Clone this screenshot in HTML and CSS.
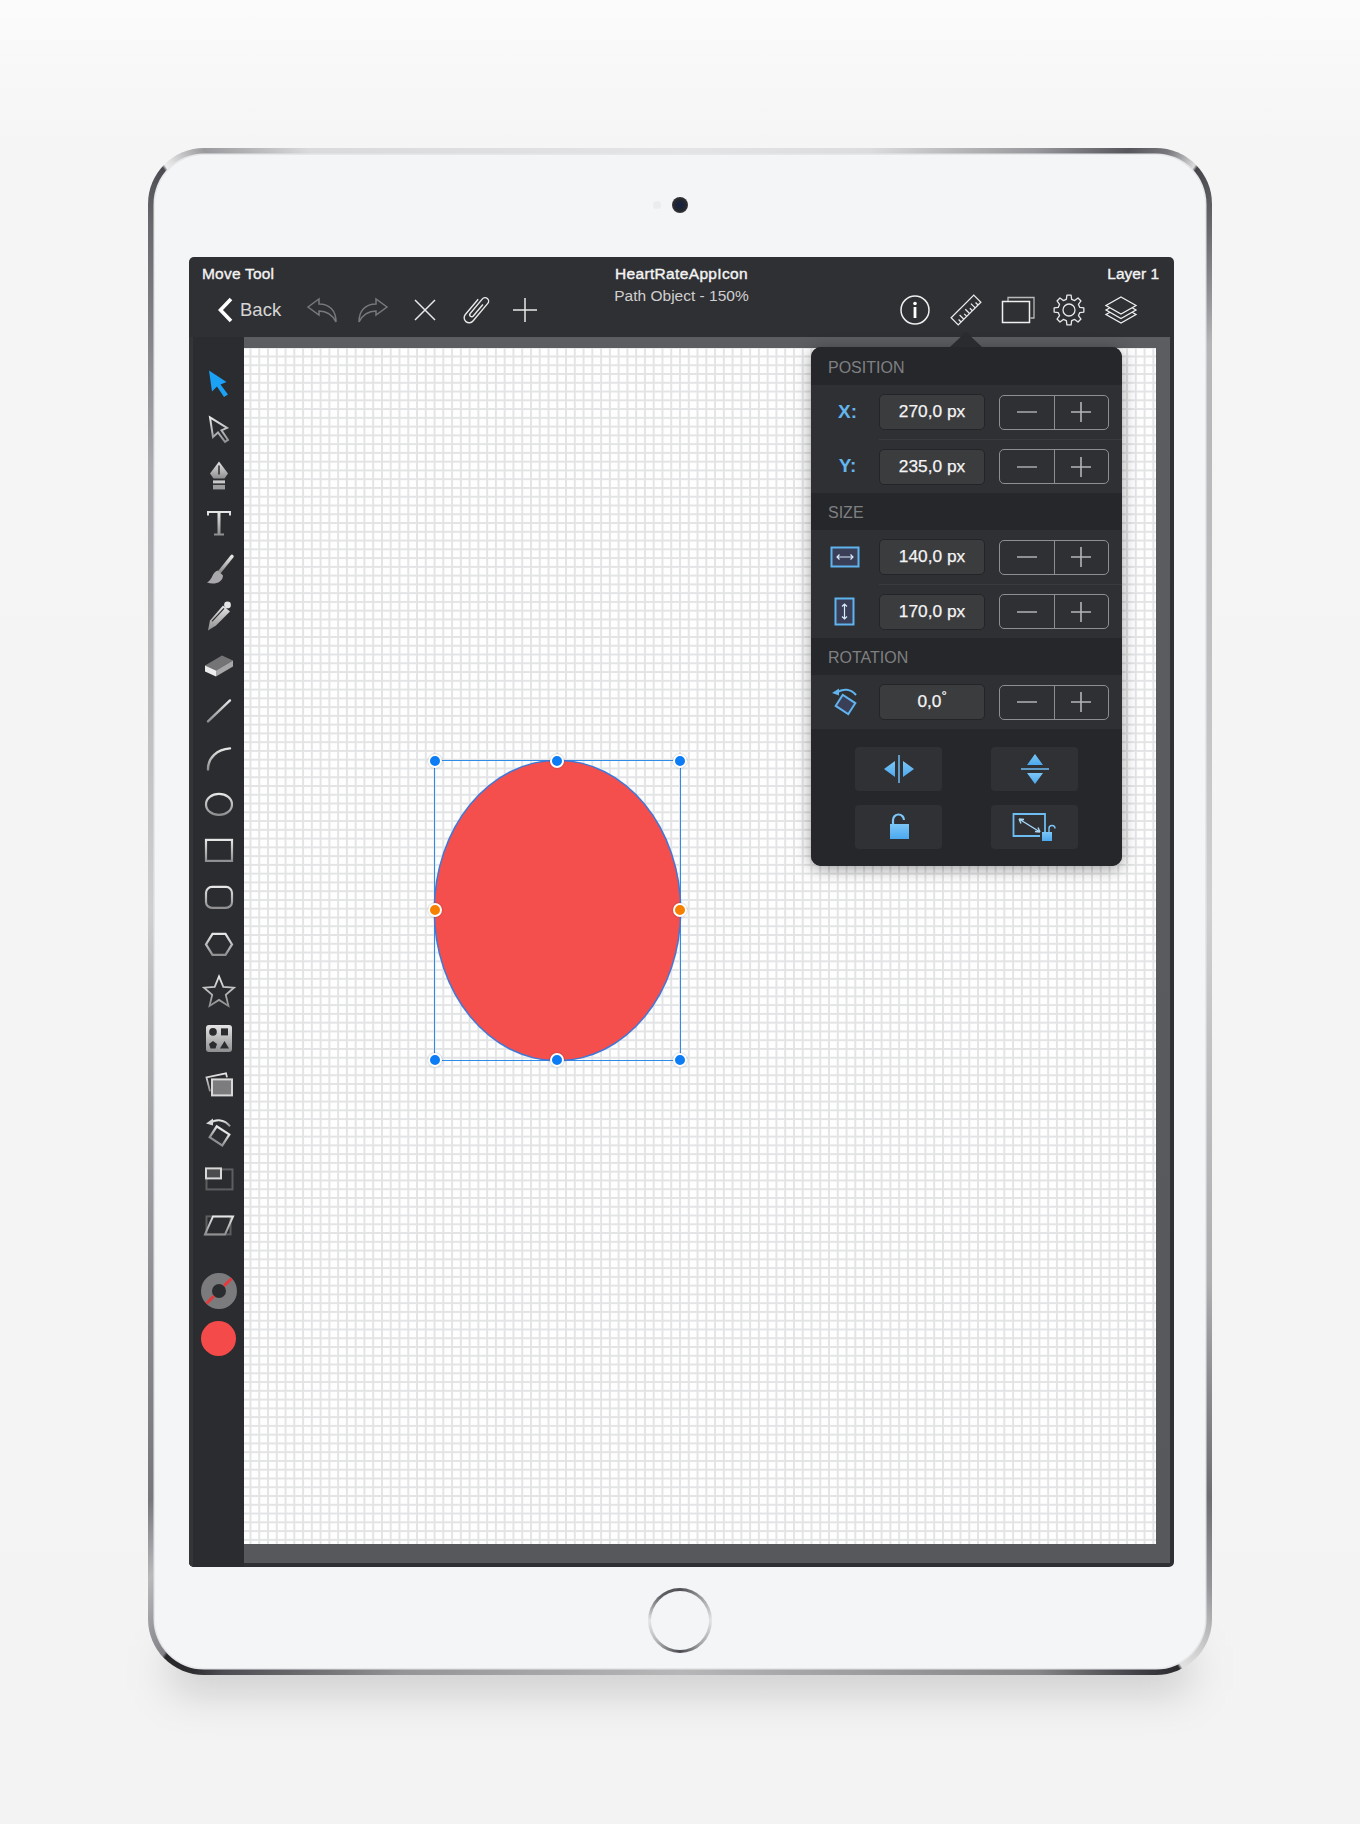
FILE: index.html
```html
<!DOCTYPE html>
<html lang="en">

<head>
    <meta charset="UTF-8">
    <meta name="viewport" content="width=device-width, initial-scale=1.0">
    <title>HeartRateAppIcon</title>
    <link rel="stylesheet" href="styles.css">
</head>

<body>
    <svg class="defs" width="0" height="0" aria-hidden="true">
        <defs>
            <linearGradient id="metal" x1="0" y1="0" x2="0" y2="1">
                <stop offset="0" stop-color="#e6e6e6" />
                <stop offset="1" stop-color="#8f8f91" />
            </linearGradient>
            <linearGradient id="blue" x1="0" y1="0" x2="0" y2="1">
                <stop offset="0" stop-color="#7cc6f7" />
                <stop offset="1" stop-color="#4ba8ee" />
            </linearGradient>
            <symbol id="minus" viewBox="0 0 20 20">
                <path d="M0 10H20" stroke="#a9aaac" stroke-width="1.6" />
            </symbol>
            <symbol id="plus" viewBox="0 0 20 20">
                <path d="M0 10H20M10 0V20" stroke="#b4b5b7" stroke-width="1.6" />
            </symbol>
        </defs>
    </svg>

    <div class="device">
        <div class="face">
            <div class="face-top">
                <span class="sensor"></span>
                <span class="camera"></span>
            </div>

            <div class="screen">
                <header class="topbar">
                    <div class="bar-left">
                        <div class="bar-label">Move Tool</div>
                        <div class="tools">
                            <a class="back">
                                <svg width="16" height="26" viewBox="0 0 16 26">
                                    <path d="M14 2L3.5 13L14 24" fill="none" stroke="#fff" stroke-width="3.6" />
                                </svg>
                                <span>Back</span>
                            </a>
                            <svg class="first-tool" width="34" height="28" viewBox="0 0 34 28">
                                <path d="M3 11L14 3V8C24 8 31 14 31 26C27 18 21 15 14 15V19Z" fill="none" stroke="#77787a" stroke-width="1.5" />
                            </svg>
                            <svg width="34" height="28" viewBox="0 0 34 28">
                                <path d="M31 11L20 3V8C10 8 3 14 3 26C7 18 13 15 20 15V19Z" fill="none" stroke="#77787a" stroke-width="1.5" />
                            </svg>
                            <svg width="34" height="28" viewBox="0 0 34 28">
                                <path d="M8 4L28 24M28 4L8 24" stroke="#e8e8e8" stroke-width="1.5" />
                            </svg>
                            <svg width="34" height="32" viewBox="0 0 34 32">
                                <g transform="translate(2 0) rotate(40 17 16)">
                                    <path d="M18 8V23a2 2 0 0 1 -4 0V4a3.5 3.5 0 0 1 7 0V27a5 5 0 0 1 -10 0V7" fill="none" stroke="#e8e8e8" stroke-width="1.4" />
                                </g>
                            </svg>
                            <svg width="34" height="28" viewBox="0 0 34 28">
                                <path d="M4 14H28M16 2V26" stroke="#e8e8e8" stroke-width="1.5" />
                            </svg>
                        </div>
                    </div>

                    <div class="bar-title">
                        <div class="doc-name">HeartRateAppIcon</div>
                        <div class="doc-sub">Path Object - 150%</div>
                    </div>

                    <div class="bar-right">
                        <div class="bar-label">Layer 1</div>
                        <div class="tools">
                            <svg width="34" height="32" viewBox="0 0 34 32">
                                <circle cx="17" cy="16" r="14" fill="none" stroke="#eee" stroke-width="1.5" />
                                <circle cx="17" cy="9.5" r="1.8" fill="#fff" />
                                <rect x="15.6" y="13" width="2.8" height="11" fill="#fff" />
                            </svg>
                            <svg width="34" height="32" viewBox="0 0 34 32">
                                <g transform="rotate(-45 17 16)" fill="none" stroke="#e8e8e8" stroke-width="1.3">
                                    <rect x="1" y="11" width="32" height="10" />
                                    <path d="M5 21V17.5M9 21V15M13 21V17.5M17 21V15M21 21V17.5M25 21V15M29 21V17.5" />
                                </g>
                            </svg>
                            <svg width="34" height="32" viewBox="0 0 34 32">
                                <path d="M7 7V3.5H33V24H29.5" fill="none" stroke="#b9babb" stroke-width="1.3" />
                                <rect x="1.5" y="7.5" width="27" height="21" fill="none" stroke="#f0f0f0" stroke-width="1.5" />
                            </svg>
                            <svg width="34" height="32" viewBox="0 0 34 32">
                                <polygon transform="translate(17 16)" fill="none" stroke="#e8e8e8" stroke-width="1.3" stroke-linejoin="round" points="-2.66,-10.67 -2.09,-14.85 2.09,-14.85 2.66,-10.67 5.67,-9.43 9.03,-11.98 11.98,-9.03 9.43,-5.67 10.67,-2.66 14.85,-2.09 14.85,2.09 10.67,2.66 9.43,5.67 11.98,9.03 9.03,11.98 5.67,9.43 2.66,10.67 2.09,14.85 -2.09,14.85 -2.66,10.67 -5.67,9.43 -9.03,11.98 -11.98,9.03 -9.43,5.67 -10.67,2.66 -14.85,2.09 -14.85,-2.09 -10.67,-2.66 -9.43,-5.67 -11.98,-9.03 -9.03,-11.98 -5.67,-9.43" />
                                <circle cx="17" cy="16" r="6" fill="none" stroke="#e8e8e8" stroke-width="1.3" />
                            </svg>
                            <svg width="34" height="32" viewBox="0 0 34 32">
                                <path d="M17 3L32 11.5L17 20L2 11.5Z" fill="none" stroke="#eee" stroke-width="1.3" />
                                <path d="M5.5 14L2 16L17 24.5L32 16L28.5 14M5.5 18.5L2 20.5L17 29L32 20.5L28.5 18.5" fill="none" stroke="#eee" stroke-width="1.3" />
                            </svg>
                        </div>
                    </div>
                </header>

                <div class="workspace">
                    <nav class="toolbox">
                        <svg viewBox="0 0 40 40"><polygon points="10,7 27.5,18.5 21.5,21 29,31 25,33.5 18,23 13,28" fill="#1ba1f5" /></svg>
                        <svg viewBox="0 0 40 40"><polygon points="11,8 28,18.5 22.5,21 29,30.5 26,32.5 19,23 14,27.5" fill="none" stroke="url(#metal)" stroke-width="2" /></svg>
                        <svg viewBox="0 0 40 40">
                            <polygon points="20,5 29,17 25.5,22 14.5,22 11,17" fill="url(#metal)" />
                            <path d="M20 9V18" stroke="#2b2c2f" stroke-width="1.5" />
                            <rect x="14" y="24" width="12" height="3" fill="#c9c9ca" />
                            <rect x="14" y="28.5" width="12" height="4.5" fill="#9d9d9f" />
                        </svg>
                        <svg viewBox="0 0 40 40">
                            <path d="M9 12V8.5H31V12M15 31H25" fill="none" stroke="url(#metal)" stroke-width="2" />
                            <rect x="18.5" y="9" width="3" height="22" fill="url(#metal)" />
                        </svg>
                        <svg viewBox="0 0 40 40">
                            <path d="M33 6L21 21" stroke="url(#metal)" stroke-width="3.4" stroke-linecap="round" />
                            <path d="M19 20C13 21 14 29 8 32C15 35 24 32 24 25Z" fill="#a9a9ab" />
                        </svg>
                        <svg viewBox="0 0 40 40">
                            <path d="M9 34L11 24L24 9L31 15L17 29Z" fill="url(#metal)" />
                            <path d="M13 25L25 12" stroke="#2b2c2f" stroke-width="1.2" />
                            <circle cx="28.5" cy="8.5" r="3.4" fill="#e4e4e4" />
                        </svg>
                        <svg viewBox="0 0 40 40">
                            <polygon points="6,22 23,12 34,17 17,27" fill="#747476" />
                            <polygon points="6,22 17,27 17,33 6,28" fill="#ececec" />
                            <polygon points="17,27 34,17 34,23 17,33" fill="#a7a7a9" />
                        </svg>
                        <svg viewBox="0 0 40 40"><path d="M9 31L31 10" stroke="url(#metal)" stroke-width="2.4" stroke-linecap="round" /></svg>
                        <svg viewBox="0 0 40 40"><path d="M9 32C9 20 18 12 31 11" fill="none" stroke="url(#metal)" stroke-width="2.4" stroke-linecap="round" /></svg>
                        <svg viewBox="0 0 40 40"><ellipse cx="20" cy="20" rx="13" ry="10.5" fill="none" stroke="url(#metal)" stroke-width="2.2" /></svg>
                        <svg viewBox="0 0 40 40"><rect x="7" y="9.5" width="26" height="21" fill="none" stroke="url(#metal)" stroke-width="2.2" /></svg>
                        <svg viewBox="0 0 40 40"><rect x="7" y="9.5" width="26" height="21" rx="6" fill="none" stroke="url(#metal)" stroke-width="2.2" /></svg>
                        <svg viewBox="0 0 40 40"><polygon points="7,20 13.5,9.5 26.5,9.5 33,20 26.5,30.5 13.5,30.5" fill="none" stroke="url(#metal)" stroke-width="2.2" /></svg>
                        <svg viewBox="0 0 40 40"><polygon points="20,5 24.3,15.5 35,16.3 26.8,23.5 29.4,34.5 20,28.5 10.6,34.5 13.2,23.5 5,16.3 15.7,15.5" fill="none" stroke="url(#metal)" stroke-width="1.8" /></svg>
                        <svg viewBox="0 0 40 40">
                            <rect x="7" y="6.5" width="26" height="27" rx="3" fill="url(#metal)" />
                            <circle cx="14" cy="13.5" r="3.8" fill="#2b2c2f" />
                            <rect x="22" y="10" width="7" height="7" fill="#2b2c2f" />
                            <polygon points="14,22.5 18,25.5 16.5,30 11.5,30 10,25.5" fill="#2b2c2f" />
                            <polygon points="25.5,22.5 30,30 21,30" fill="#2b2c2f" />
                        </svg>
                        <svg viewBox="0 0 40 40">
                            <path d="M11 27L7.5 13L27 9L28 13" fill="none" stroke="url(#metal)" stroke-width="1.8" />
                            <rect x="13" y="15" width="20" height="16" fill="#7c7c7e" stroke="#d8d8d8" stroke-width="2" />
                        </svg>
                        <svg viewBox="0 0 40 40">
                            <path d="M11 12C17 7 26 8 31 15" fill="none" stroke="url(#metal)" stroke-width="2" />
                            <polygon points="7,12 14,7 14,14" fill="#d8d8d8" />
                            <rect x="13" y="18" width="15" height="13" transform="rotate(33 20.5 24.5)" fill="none" stroke="url(#metal)" stroke-width="2.2" />
                        </svg>
                        <svg viewBox="0 0 40 40">
                            <rect x="7.5" y="11" width="26" height="20" fill="none" stroke="#5d5e60" stroke-width="2" />
                            <rect x="7" y="10" width="15" height="10" fill="#4b4c4e" stroke="#d8d8d8" stroke-width="2" />
                        </svg>
                        <svg viewBox="0 0 40 40">
                            <rect x="7.5" y="11" width="24" height="18" fill="none" stroke="#5d5e60" stroke-width="2" />
                            <polygon points="6,29 14,11 34,11 26,29" fill="none" stroke="url(#metal)" stroke-width="2" />
                        </svg>
                        <svg class="stroke-well" viewBox="0 0 36 36">
                            <circle cx="18" cy="18" r="12.5" fill="none" stroke="#7b7b7e" stroke-width="11" />
                            <path d="M5.5 30.5L13 23M23 13L30.5 5.5" stroke="#e8393a" stroke-width="3" />
                        </svg>
                        <span class="fill-well"></span>
                    </nav>

                    <div class="pasteboard">
                        <div class="canvas">
                            <div class="selection">
                                <div class="oval"></div>
                                <span class="handle h-tl"></span>
                                <span class="handle h-tc"></span>
                                <span class="handle h-tr"></span>
                                <span class="handle orange h-ml"></span>
                                <span class="handle orange h-mr"></span>
                                <span class="handle h-bl"></span>
                                <span class="handle h-bc"></span>
                                <span class="handle h-br"></span>
                            </div>
                        </div>
                    </div>

                    <aside class="popover">
                        <div class="pop-head">POSITION</div>
                        <div class="row">
                            <div class="row-label">X:</div>
                            <div class="row-body">
                                <div class="value">270,0 px</div>
                                <div class="stepper">
                                    <span><svg width="20" height="20"><use href="#minus" /></svg></span>
                                    <span><svg width="20" height="20"><use href="#plus" /></svg></span>
                                </div>
                            </div>
                        </div>
                        <div class="row">
                            <div class="row-label">Y:</div>
                            <div class="row-body">
                                <div class="value">235,0 px</div>
                                <div class="stepper">
                                    <span><svg width="20" height="20"><use href="#minus" /></svg></span>
                                    <span><svg width="20" height="20"><use href="#plus" /></svg></span>
                                </div>
                            </div>
                        </div>

                        <div class="pop-head">SIZE</div>
                        <div class="row">
                            <div class="row-label">
                                <svg class="row-icon" width="30" height="22" viewBox="0 0 30 22">
                                    <rect x="1.5" y="1.5" width="27" height="19" fill="#3b3e57" stroke="#5fb4ef" stroke-width="2" />
                                    <path d="M7 11H23M9.5 8.5L7 11L9.5 13.5M20.5 8.5L23 11L20.5 13.5" fill="none" stroke="#d7ecfb" stroke-width="1.2" />
                                </svg>
                            </div>
                            <div class="row-body">
                                <div class="value">140,0 px</div>
                                <div class="stepper">
                                    <span><svg width="20" height="20"><use href="#minus" /></svg></span>
                                    <span><svg width="20" height="20"><use href="#plus" /></svg></span>
                                </div>
                            </div>
                        </div>
                        <div class="row">
                            <div class="row-label">
                                <svg class="row-icon" width="21" height="29" viewBox="0 0 21 29">
                                    <rect x="1.5" y="1.5" width="18" height="26" fill="#3b3e57" stroke="#5fb4ef" stroke-width="2" />
                                    <path d="M10.5 7V22M8 9.5L10.5 7L13 9.5M8 19.5L10.5 22L13 19.5" fill="none" stroke="#d7ecfb" stroke-width="1.2" />
                                </svg>
                            </div>
                            <div class="row-body">
                                <div class="value">170,0 px</div>
                                <div class="stepper">
                                    <span><svg width="20" height="20"><use href="#minus" /></svg></span>
                                    <span><svg width="20" height="20"><use href="#plus" /></svg></span>
                                </div>
                            </div>
                        </div>

                        <div class="pop-head">ROTATION</div>
                        <div class="row">
                            <div class="row-label">
                                <svg class="row-icon" width="30" height="32" viewBox="0 0 30 32">
                                    <path d="M7 6.5C13 2 21 3 26 9" fill="none" stroke="#5fb4ef" stroke-width="2" />
                                    <polygon points="2,7 9,2.5 9,9.5" fill="#5fb4ef" />
                                    <rect x="8" y="12" width="15" height="13" transform="rotate(33 15.5 18.5)" fill="#3b3e57" stroke="#5fb4ef" stroke-width="2" />
                                </svg>
                            </div>
                            <div class="row-body">
                                <div class="value">0,0<sup>°</sup></div>
                                <div class="stepper">
                                    <span><svg width="20" height="20"><use href="#minus" /></svg></span>
                                    <span><svg width="20" height="20"><use href="#plus" /></svg></span>
                                </div>
                            </div>
                        </div>

                        <div class="actions">
                            <button type="button">
                                <svg width="32" height="32" viewBox="0 0 32 32">
                                    <polygon points="1,16 12,8 12,24" fill="url(#blue)" />
                                    <polygon points="31,16 20,8 20,24" fill="url(#blue)" />
                                    <path d="M16 2V30" stroke="#6dbdf3" stroke-width="1.5" />
                                </svg>
                            </button>
                            <button type="button">
                                <svg width="32" height="32" viewBox="0 0 32 32">
                                    <polygon points="16,1 24,12 8,12" fill="url(#blue)" />
                                    <polygon points="16,31 24,20 8,20" fill="url(#blue)" />
                                    <path d="M2 16H30" stroke="#6dbdf3" stroke-width="1.5" />
                                </svg>
                            </button>
                            <button type="button">
                                <svg width="24" height="30" viewBox="0 0 24 30">
                                    <path d="M6 13V8a5.5 5.5 0 0 1 11 0" fill="none" stroke="#7cc6f7" stroke-width="2.2" />
                                    <rect x="3" y="12" width="19" height="15" fill="url(#blue)" />
                                </svg>
                            </button>
                            <button type="button">
                                <svg width="46" height="30" viewBox="0 0 46 30">
                                    <path d="M33 22V2H1.5V24H28" fill="none" stroke="#6dbdf3" stroke-width="1.8" />
                                    <path d="M7 7L28 20M7 7L12 7.5M7 7L9 11.5M28 20L23 19.5M28 20L26 15.5" fill="none" stroke="#a8d8f8" stroke-width="1.4" />
                                    <rect x="30" y="20" width="10" height="9" fill="url(#blue)" />
                                    <path d="M37 20V16.5a3 3 0 0 1 6 0" fill="none" stroke="#7cc6f7" stroke-width="1.4" />
                                </svg>
                            </button>
                        </div>
                    </aside>
                </div>
            </div>

            <div class="face-bottom">
                <span class="home"><span class="home-inner"></span></span>
            </div>
        </div>
    </div>
</body>

</html>
```

FILE: styles.css
```css
* {
    box-sizing: border-box;
}

body {
    margin: 0;
    height: 1824px;
    overflow: hidden;
    padding: 148px 148px 0;
    font-family: "Liberation Sans", Arial, sans-serif;
    background: linear-gradient(#fbfbfb 0, #f5f5f5 150px, #f3f3f3 100%);
}

.defs {
    position: absolute;
}

/* tablet shell */
.device {
    position: relative;
    z-index: 0;
    width: 1064px;
    height: 1527px;
    padding: 7px;
    border-radius: 56px;
    background: conic-gradient(#e4e4e6 0deg, #dcdcde 14deg, #9a9a9e 25deg, #56565c 30.5deg, #77777c 32.7deg, #dadadc 34.6deg,
        #45454a 34.8deg, #66666b 37.6deg, #b5b5b8 43deg, #cfcfd1 90deg, #aeaeb1 125deg, #6d6d72 137.9deg, #98989c 142deg, #f4f4f4 146.4deg,
        #2f2f33 146.6deg, #444449 148.4deg, #99999c 154.8deg, #d0d0d2 180deg, #aaaaad 200deg, #58585d 211deg, #333337 212.7deg, #2a2a2e 214.6deg,
        #85858a 214.8deg, #b9b9bc 218.5deg, #77777c 222deg, #cfcfd1 270deg, #aeaeb2 310deg, #68686e 322.4deg, #4a4a50 325.2deg,
        #eeeeee 325.4deg, #9a9a9e 328deg, #dadadc 334deg, #e4e4e6 360deg);
}

.device::before {
    content: "";
    position: absolute;
    z-index: -1;
    left: 24px;
    right: 24px;
    bottom: -16px;
    height: 46px;
    background: rgba(0, 0, 0, 0.17);
    filter: blur(22px);
}

.face {
    display: flex;
    flex-direction: column;
    height: 100%;
    border-radius: 49px;
    background: #f4f5f7;
    box-shadow: 0 0 0 1.5px #e6e7e9;
}

.face-top {
    position: relative;
    display: flex;
    justify-content: center;
    height: 102px;
    padding-top: 42px;
}

.camera {
    width: 16px;
    height: 16px;
    border-radius: 50%;
    background: radial-gradient(circle, #18233f 0, #18233f 22%, #26272c 50%, #4a4b50 100%);
}

.sensor {
    position: absolute;
    left: 498px;
    top: 46px;
    width: 8px;
    height: 8px;
    border-radius: 50%;
    background: #ebecee;
}

.face-bottom {
    display: flex;
    justify-content: center;
    padding-top: 21px;
}

.home {
    width: 64px;
    height: 65px;
    padding: 3px;
    border-radius: 50%;
    background: conic-gradient(#4f4f54 0deg, #a9a9ac 50deg, #e4e4e6 90deg, #a3a3a6 140deg, #49494e 180deg, #b9b9bc 230deg, #e6e6e8 270deg, #626267 320deg, #4f4f54 360deg);
}

.home-inner {
    display: block;
    height: 100%;
    border-radius: 50%;
    background: #f4f5f7;
}

/* app */
.screen {
    display: flex;
    flex-direction: column;
    height: 1310px;
    margin: 0 31px 0 34px;
    border-radius: 5px;
    overflow: hidden;
    background: #2f3033;
}

.topbar {
    display: grid;
    grid-template-columns: 1fr auto 1fr;
    flex: none;
    height: 80px;
    color: #fff;
}

.bar-label {
    height: 34px;
    padding: 0 15px 0 13px;
    font-size: 15.5px;
    line-height: 34px;
    letter-spacing: 0.2px;
    color: #f4f4f4;
    -webkit-text-stroke: 0.35px #f4f4f4;
}

.bar-right .bar-label {
    text-align: right;
    letter-spacing: 0;
}

.tools {
    display: flex;
    align-items: center;
    gap: 17px;
    height: 38px;
}

.bar-left .tools {
    padding-left: 28px;
}

.bar-right .tools {
    justify-content: flex-end;
    gap: 17.6px;
    padding-right: 36px;
}

.back {
    display: flex;
    align-items: center;
    gap: 7px;
    font-size: 18.5px;
    color: #d6d6d6;
}

.first-tool {
    margin-left: 7px;
}

.bar-title {
    padding-top: 6px;
    text-align: center;
}

.doc-name {
    font-size: 15.5px;
    line-height: 22px;
    letter-spacing: 0.35px;
    color: #f4f4f4;
    -webkit-text-stroke: 0.4px #f4f4f4;
}

.doc-sub {
    font-size: 15.5px;
    line-height: 22px;
    color: #cfcfd0;
}

.workspace {
    position: relative;
    display: flex;
    flex: 1;
    min-height: 0;
}

.toolbox {
    display: flex;
    flex-direction: column;
    align-items: center;
    flex: none;
    width: 55px;
    padding-top: 22.5px;
    background: #2b2c2f;
    border-left: 4px solid #343538;
}

.toolbox svg {
    flex: none;
    width: 40px;
    height: 46.8px;
}

.toolbox .stroke-well {
    width: 36px;
    height: 36px;
    margin-top: 24.4px;
}

.fill-well {
    width: 35px;
    height: 35px;
    margin-top: 12px;
    border-radius: 50%;
    background: #f44a49;
}

.pasteboard {
    display: flex;
    flex: 1;
    margin: 0 4px 4px 0;
    padding: 11px 14px 19px 0;
    background: linear-gradient(#5c5d60, #57585b);
}

.canvas {
    position: relative;
    flex: 1;
    background-color: #fefefe;
    background-image:
        linear-gradient(#e3e4e6 0, #e3e4e6 1.5px, transparent 1.5px),
        linear-gradient(90deg, #e3e4e6 0, #e3e4e6 1.5px, transparent 1.5px);
    background-size: 8.77px 8.77px;
    background-position: 5.5px 7.5px;
}

/* shape on the canvas */
.selection {
    position: absolute;
    left: 189.5px;
    top: 411.5px;
    width: 247.5px;
    height: 301.5px;
    border: 1.5px solid #2f8be8;
}

.oval {
    height: 100%;
    border-radius: 50%;
    background: #f44f4c;
    box-shadow: 0 0 0 1.5px #3f78d8;
}

.handle {
    position: absolute;
    width: 14px;
    height: 14px;
    margin: -7px 0 0 -7px;
    border: 2px solid #fff;
    border-radius: 50%;
    background: #0b7cf3;
    box-shadow: 0 0 2px rgba(0, 0, 0, 0.3);
}

.orange {
    background: #f78000;
}

.h-tl { left: 0; top: 0; }
.h-tc { left: 50%; top: 0; }
.h-tr { left: 100%; top: 0; }
.h-ml { left: 0; top: 50%; }
.h-mr { left: 100%; top: 50%; }
.h-bl { left: 0; top: 100%; }
.h-bc { left: 50%; top: 100%; }
.h-br { left: 100%; top: 100%; }

/* popover */
.popover {
    position: absolute;
    left: 622px;
    top: 10px;
    width: 311px;
    height: 519px;
    border-radius: 10px;
    background: #2f3033;
    box-shadow: 0 3px 16px rgba(0, 0, 0, 0.38);
}

.popover::before {
    content: "";
    position: absolute;
    left: 139px;
    top: -15px;
    border-left: 16px solid transparent;
    border-right: 16px solid transparent;
    border-bottom: 15px solid #2a2b2e;
}

.pop-head {
    height: 37px;
    padding-left: 17px;
    font-size: 16px;
    line-height: 39px;
    color: #7f8082;
    background: #26272a;
}

.pop-head:first-child {
    height: 38px;
    line-height: 41px;
    border-radius: 10px 10px 0 0;
}

.row {
    display: flex;
    height: 54px;
}

.row-label {
    display: flex;
    align-items: center;
    justify-content: center;
    flex: none;
    width: 68px;
    padding-left: 5px;
    font-size: 19px;
    font-weight: bold;
    color: #63b5ec;
}

.row-icon {
    margin-left: -6px;
}

.row-body {
    display: flex;
    align-items: center;
    gap: 14px;
    flex: 1;
}

.row + .row .row-body {
    border-top: 1px solid #3a3b3e;
}

.value {
    width: 106px;
    height: 36px;
    border: 1px solid #232427;
    border-radius: 5px;
    font-size: 17.3px;
    line-height: 33px;
    text-align: center;
    color: #f4f4f4;
    -webkit-text-stroke: 0.25px #f4f4f4;
    background: #3b3c3e;
}

.value sup {
    font-size: 13px;
    line-height: 0;
}

.stepper {
    display: flex;
    width: 110px;
    height: 35px;
    border: 1.5px solid #8d8e90;
    border-radius: 5px;
}

.stepper span {
    display: flex;
    align-items: center;
    justify-content: center;
    flex: 1;
}

.stepper span + span {
    border-left: 1.5px solid #8d8e90;
}

.actions {
    display: grid;
    grid-template-columns: 87px 87px;
    grid-auto-rows: 44px;
    justify-content: center;
    gap: 14px 49px;
    height: 137px;
    padding-top: 18px;
    border-radius: 0 0 10px 10px;
    background: #26272a;
}

.actions button {
    display: flex;
    align-items: center;
    justify-content: center;
    padding: 0;
    border: none;
    border-radius: 4px;
    background: #303134;
}
```
